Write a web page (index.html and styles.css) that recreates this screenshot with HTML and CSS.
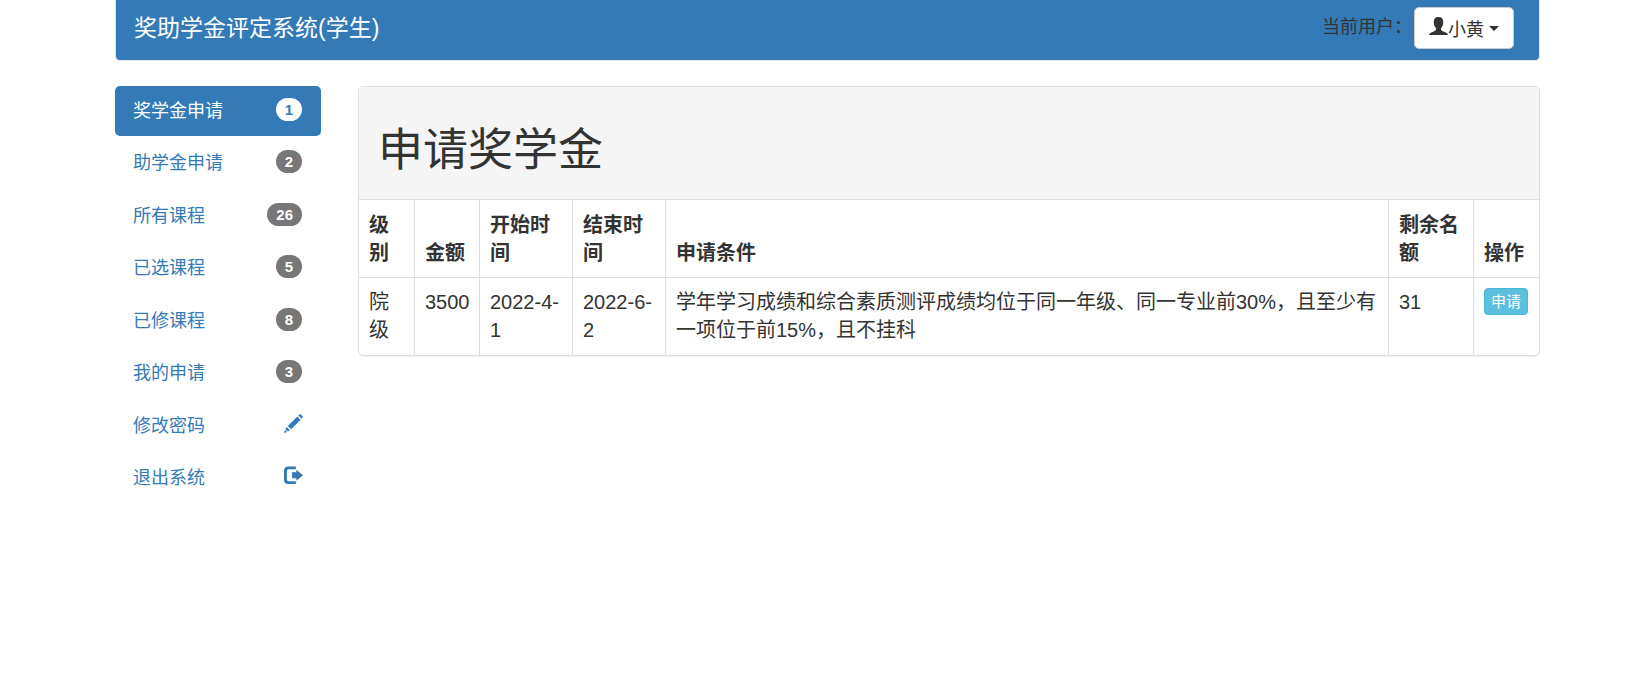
FILE: index.html
```html
<!DOCTYPE html>
<html lang="zh-CN">
<head>
    <meta charset="UTF-8">
    <meta name="viewport" content="width=device-width, initial-scale=1.0">
    <title>奖助学金评定系统</title>
    <link rel="stylesheet" href="styles.css">
</head>
<body>

<div class="container">
    <header class="navbar">
        <a class="navbar-brand" href="#">奖助学金评定系统(学生)</a>
        <div class="navbar-user">
            <span>当前用户：</span>
            <button type="button" class="btn-user">
                <svg class="icon" viewBox="0 0 20 20"><path d="M10 0C6.500 0 5 2 5 5.200C5 8 6 10.300 7.300 11.500V13C7.300 13.800 7 14.300 6 14.700L2.500 16.200C1 16.900 0.300 17.600 0 19H20C19.700 17.600 19 16.900 17.500 16.200L14 14.700C13 14.300 12.700 13.800 12.700 13V11.500C14 10.300 15 8 15 5.200C15 2 13.500 0 10 0Z"/></svg>小黄
                <span class="caret"></span>
            </button>
        </div>
    </header>

    <div class="row">
        <nav>
            <ul class="nav-pills">
                <li><a class="active" href="#">奖学金申请 <span class="badge">1</span></a></li>
                <li><a href="#">助学金申请 <span class="badge">2</span></a></li>
                <li><a href="#">所有课程 <span class="badge">26</span></a></li>
                <li><a href="#">已选课程 <span class="badge">5</span></a></li>
                <li><a href="#">已修课程 <span class="badge">8</span></a></li>
                <li><a href="#">我的申请 <span class="badge">3</span></a></li>
                <li><a href="#">修改密码
                    <svg class="icon" viewBox="0 0 20 20"><path d="M15 1.500L16.300 0.400Q17 0 17.700 0.500L19.500 2.300Q20 3 19.600 3.700L18.500 5ZM14 2.500L17.500 6L7.500 16L4 12.500ZM2.800 13.600L6.400 17.200L4 18.500L1.500 16ZM1 16.800L3.200 19L0 20Z"/></svg>
                </a></li>
                <li><a href="#">退出系统
                    <svg class="icon" viewBox="0 0 20 20"><path d="M12.500 0.500H4.500Q0 0.500 0 5V14.500Q0 19 4.500 19H12.500V16H5Q3 16 3 14V5.500Q3 3.500 5 3.500H12.500ZM13 4L20 9.800L13 15.600V13H8.500V6.600H13Z"/></svg>
                </a></li>
            </ul>
        </nav>

        <main class="panel">
            <div class="panel-heading">
                <h1>申请奖学金</h1>
            </div>
            <table class="table">
                <thead>
                    <tr>
                        <th class="col-level">级别</th>
                        <th class="col-money">金额</th>
                        <th class="col-date">开始时间</th>
                        <th class="col-date">结束时间</th>
                        <th>申请条件</th>
                        <th class="col-left">剩余名额</th>
                        <th class="col-action">操作</th>
                    </tr>
                </thead>
                <tbody>
                    <tr>
                        <td>院级</td>
                        <td>3500</td>
                        <td>2022-4-1</td>
                        <td>2022-6-2</td>
                        <td>学年学习成绩和综合素质测评成绩均位于同一年级、同一专业前30%，且至少有一项位于前15%，且不挂科</td>
                        <td>31</td>
                        <td><button type="button" class="btn-apply">申请</button></td>
                    </tr>
                </tbody>
            </table>
        </main>
    </div>
</div>

</body>
</html>
```
FILE: styles.css
```css
* { box-sizing: border-box; }
body { margin: 0; background: #fff; color: #333; font-family: "Liberation Sans", "Noto Sans CJK SC", sans-serif; font-size: 18px; line-height: 25px; }
a { color: #337ab7; text-decoration: none; }
button { font-family: inherit; cursor: pointer; }

.container { padding: 0 87px 0 115px; }

.navbar { display: flex; justify-content: space-between; align-items: flex-start; height: 61px; padding: 7px 25px 0 18px; background: #337ab7; border: 1px solid #e7e7e7; border-top: 0; border-radius: 0 0 5px 5px; }
.navbar-brand { color: #fff; font-size: 23px; line-height: 42px; }
.navbar-user { display: flex; gap: 2px; line-height: 40px; }
.btn-user { display: flex; align-items: center; height: 42px; padding: 0 14px; background: #fff; color: #333; border: 1px solid #ccc; border-radius: 5px; font-size: 18px; }
.btn-user .icon { margin-bottom: 4px; }
.caret { margin-left: 5px; border-top: 5px solid; border-left: 5px solid transparent; border-right: 5px solid transparent; }
.icon { width: 19px; height: 19px; fill: currentColor; }

.row { display: grid; grid-template-columns: 206px 1fr; gap: 37px; align-items: start; margin-top: 25px; }

.nav-pills { display: flex; flex-direction: column; justify-content: space-between; min-height: 418px; margin: 0; padding: 0; list-style: none; }
.nav-pills a { display: flex; justify-content: space-between; align-items: center; height: 50px; padding: 0 18px; border-radius: 5px; }
.nav-pills .icon { margin-bottom: 6px; }
.nav-pills .active { background: #337ab7; color: #fff; }
.badge { margin: 0 1px 4px 0; padding: 4px 9px; background: #777; color: #fff; border-radius: 12px; font-size: 15px; line-height: 15px; font-weight: bold; }
.active .badge { background: #fff; color: #337ab7; }

.panel { border: 1px solid #ddd; border-radius: 5px; overflow: hidden; box-shadow: 0 1px 1px rgba(0,0,0,0.05); }
.panel-heading { padding: 13px 19px 12px; background: #f5f5f5; }
h1 { margin: 26px 0 11px; font-size: 45px; line-height: 50px; font-weight: 400; }

.table { width: 100%; table-layout: fixed; border-collapse: separate; border-spacing: 0; font-size: 20px; line-height: 28px; }
.table th, .table td { padding: 10px 10px 11px; border-top: 1px solid #ddd; border-right: 1px solid #ddd; text-align: left; vertical-align: top; }
.table th { padding: 11px 10px 10px; vertical-align: bottom; font-weight: bold; }
.table th:last-child, .table td:last-child { border-right: 0; }
.col-level { width: 56px; }
.col-money { width: 65px; }
.col-date { width: 93px; }
.col-left { width: 85px; }
.col-action { width: 65px; }
.btn-apply { display: block; padding: 1px 6px; background: #5bc0de; color: #fff; border: 1px solid #46b8da; border-radius: 4px; font-size: 15px; line-height: 23px; }
```
